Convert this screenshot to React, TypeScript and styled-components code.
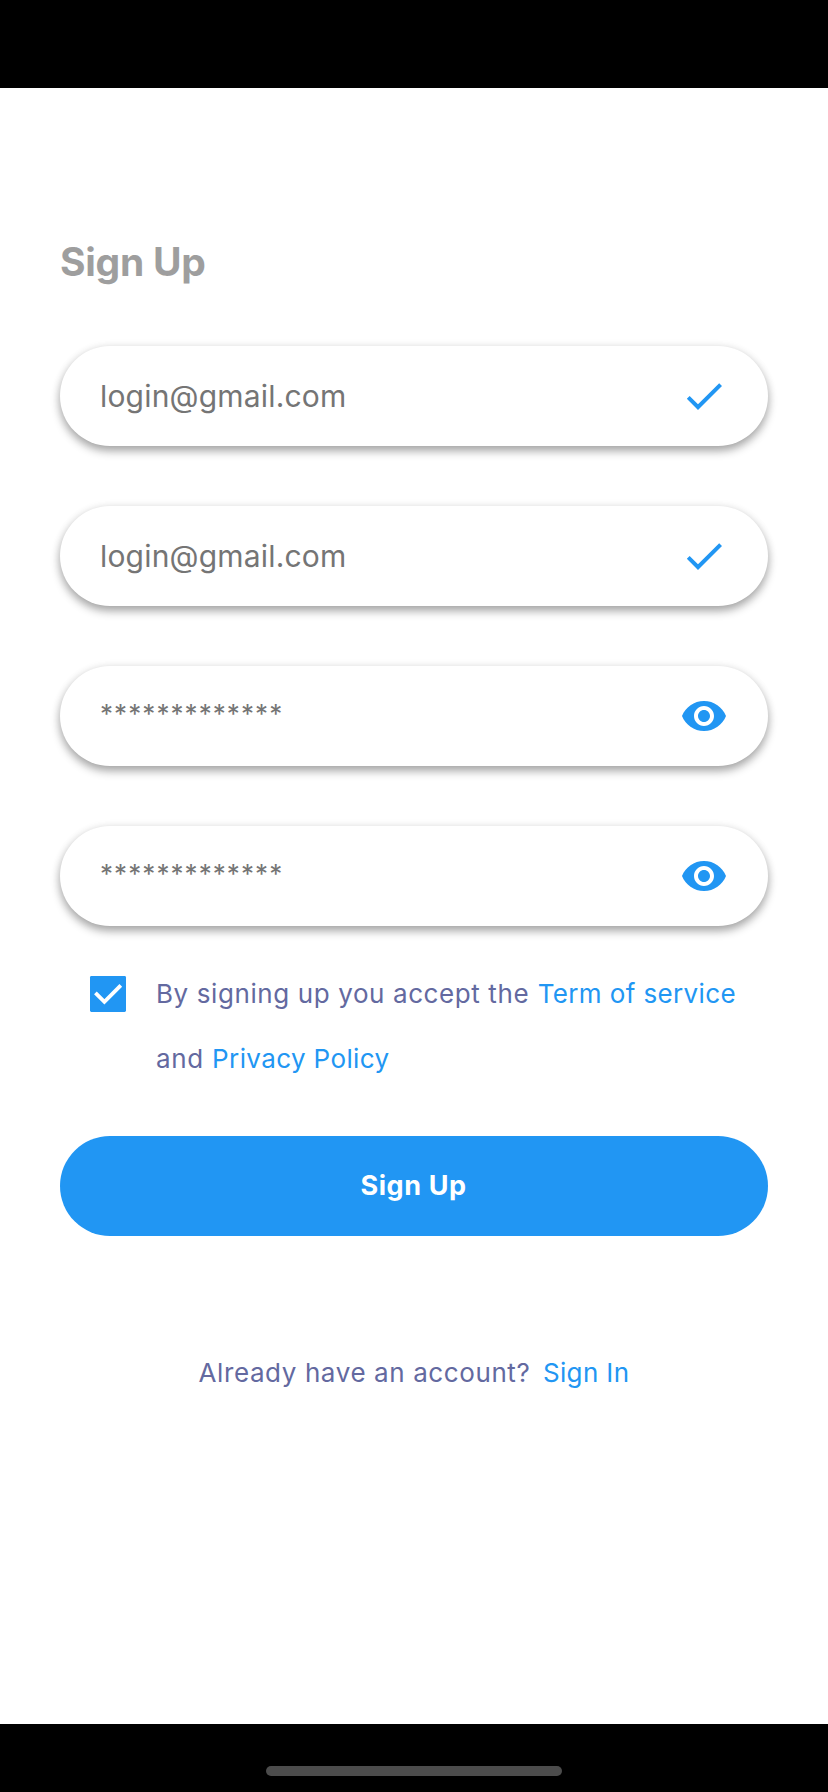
import React from "react";
import styled, { createGlobalStyle } from "styled-components";

const GlobalStyle = createGlobalStyle`
  * { box-sizing: border-box; }
  body { margin: 0; background: #fff; }
`;
const Screen = styled.main`
  width: 828px; height: 1792px; display: flex; flex-direction: column;
  background: #fff; font-family: Inter, sans-serif; overflow: hidden;
`;
const StatusBar = styled.div`height: 88px; flex: none; background: #000;`;
const Content = styled.form`
  flex: 1; display: flex; flex-direction: column; padding: 145px 60px 0;
`;
const Title = styled.h1`
  margin: 0 0 55px; height: 58px; line-height: 58px; font-size: 39px; font-weight: 700;
  letter-spacing: -0.25px; color: #9e9e9e; white-space: nowrap;
`;
const Fields = styled.div`display: flex; flex-direction: column; gap: 60px;`;
const Field = styled.div`
  height: 100px; border-radius: 50px; background: #fff; padding: 0 40px;
  display: flex; align-items: center; justify-content: space-between;
  box-shadow: 0 5px 10px rgba(0,0,0,.33), 0 1px 10px rgba(0,0,0,.08);
`;
const Value = styled.span<{ $masked?: boolean }>`
  font-size: ${p => (p.$masked ? 26 : 30)}px; line-height: 40px; color: #757575;
  letter-spacing: ${p => (p.$masked ? 1.07 : 0.18)}px;
  padding-bottom: ${p => (p.$masked ? 4 : 0)}px;
`;
const Icon = styled.svg`width: 48px; height: 48px; fill: #2196f3; flex: none;`;
const Terms = styled.div`display: flex; padding: 35px 0 0 24px; height: 210px;`;
const Checkbox = styled.svg`width: 48px; height: 48px; margin-top: 9px; fill: #2196f3; flex: none;`;
const TermsText = styled.p`
  margin: 0 0 0 24px; font-size: 26px; line-height: 65px; letter-spacing: .6px; color: #6369a0; white-space: nowrap;
`;
const Link = styled.span`color: #2196f3; letter-spacing: .38px; margin-left: .5px;`;
const Submit = styled.button`
  height: 100px; flex: none; border: 0; border-radius: 50px; background: #2196f3; color: #fff;
  font: 700 27px/40px Inter, sans-serif; letter-spacing: .6px; padding: 0 1px 1px 0;
`;
const Footer = styled.p`
  margin: 117px 0 0; display: flex; justify-content: center; gap: 12px;
  font-size: 26px; line-height: 40px; letter-spacing: .6px; color: #6369a0;
`;
const BottomBar = styled.div`
  height: 68px; flex: none; background: #000; display: flex; justify-content: center; align-items: flex-end; padding-bottom: 16px;
`;
const Handle = styled.div`width: 296px; height: 10px; border-radius: 5px; background: #4c4c4c;`;

const Check = () => <Icon viewBox="0 0 24 24"><path d="M9 16.17L4.83 12l-1.42 1.41L9 19 21 7l-1.41-1.41z" /></Icon>;
const Eye = () => (
  <Icon viewBox="0 0 24 24"><path d="M12 4.5C7 4.5 2.73 7.61 1 12c1.73 4.39 6 7.5 11 7.5s9.27-3.11 11-7.5c-1.73-4.39-6-7.5-11-7.5zM12 17c-2.76 0-5-2.24-5-5s2.24-5 5-5 5 2.24 5 5-2.24 5-5 5zm0-8c-1.66 0-3 1.34-3 3s1.34 3 3 3 3-1.34 3-3-1.34-3-3-3z" /></Icon>
);
const email = "login@gmail.com";
const password = "*************";

export default function App() {
  return (
    <Screen>
      <GlobalStyle />
      <StatusBar />
      <Content>
        <Title>Sign Up</Title>
        <Fields>
          <Field><Value>{email}</Value><Check /></Field>
          <Field><Value>{email}</Value><Check /></Field>
          <Field><Value $masked>{password}</Value><Eye /></Field>
          <Field><Value $masked>{password}</Value><Eye /></Field>
        </Fields>
        <Terms>
          <Checkbox viewBox="0 0 24 24"><rect x="3" y="3" width="18" height="18" rx=".7" /><path d="M5.7 11.4l4.5 4.5 8.2-8.2" fill="none" stroke="#fff" strokeWidth="1.9" /></Checkbox>
          <TermsText>By signing up you accept the <Link>Term of service</Link><br />and <Link>Privacy Policy</Link></TermsText>
        </Terms>
        <Submit type="button">Sign Up</Submit>
        <Footer><span>Already have an account?</span><Link>Sign In</Link></Footer>
      </Content>
      <BottomBar><Handle /></BottomBar>
    </Screen>
  );
}
